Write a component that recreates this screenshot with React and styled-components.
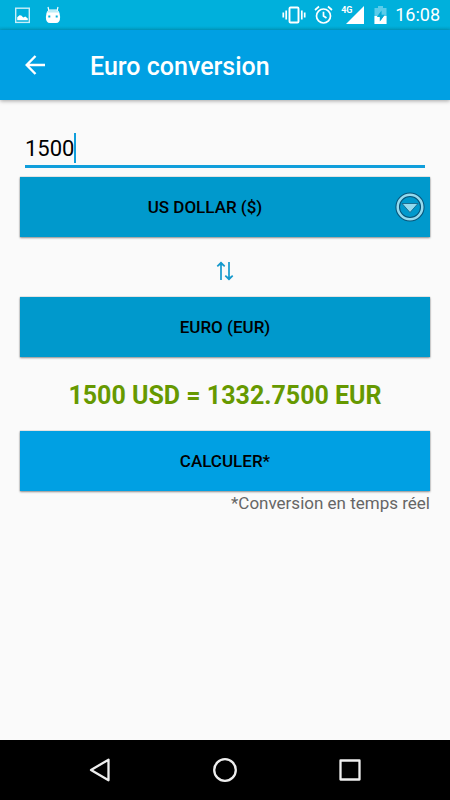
import React, { useState } from "react";
import styled, { createGlobalStyle } from "styled-components";

const GlobalStyle = createGlobalStyle`
  *, *::before, *::after { box-sizing: border-box; }
  body { margin: 0; background: #fafafa; }
  button, input, select { font: inherit; color: inherit; margin: 0; }
`;

const Screen = styled.div`
  min-height: 100vh;
  display: flex;
  flex-direction: column;
  background: #fafafa;
  color: #000;
  font-family: Roboto, "Liberation Sans", sans-serif;
`;

const StatusBar = styled.div`
  height: 30px;
  padding: 0 10px 0 14px;
  display: flex;
  align-items: center;
  justify-content: space-between;
  background: linear-gradient(#00b0dc 26px, #00a2ca);
  color: #fff;
`;

const StatusGroup = styled.div`
  display: flex;
  align-items: center;
  gap: ${(p) => p.$gap}px;
`;

const Clock = styled.time`
  font-size: 18px;
  line-height: 30px;
`;

const Signal = styled.span`
  position: relative;
  display: flex;
  padding: 0 2px 0 5px;
`;

const Network = styled.span`
  position: absolute;
  left: 0;
  top: 0;
  font-size: 9px;
  line-height: 9px;
  font-weight: 700;
`;

const AppBar = styled.header`
  height: 70px;
  padding: 0 20px;
  display: flex;
  align-items: center;
  gap: 40px;
  background: #00a0e3;
  color: #fff;
  box-shadow: 0 1px 4px rgba(0, 0, 0, 0.35);
`;

const IconButton = styled.button`
  display: flex;
  padding: 0;
  border: 0;
  background: none;
  cursor: pointer;
`;

const Title = styled.h1`
  margin: 0;
  padding-top: 3px;
  font-size: 25px;
  line-height: 32px;
  font-weight: 500;
`;

const Form = styled.form`
  flex: 1;
  padding: 30px 20px;
  display: flex;
  flex-direction: column;
`;

const AmountField = styled.label`
  height: 38px;
  margin: 0 5px 9px;
  display: flex;
  align-items: center;
  border-bottom: 3px solid #109edb;
`;

const AmountInput = styled.input`
  field-sizing: content;
  min-width: 12px;
  padding: 2px 0 0;
  border: 0;
  outline: 0;
  background: none;
  caret-color: transparent;
  font-size: 22px;
  line-height: 30px;
`;

const Caret = styled.span`
  width: 2px;
  height: 30px;
  background: #109edb;
`;

const raised = `
  width: 100%;
  height: 60px;
  border: 0;
  border-radius: 0;
  font-size: 17px;
  font-weight: 500;
  box-shadow: 0 0 1px rgba(0, 0, 0, 0.4), 0 1px 2px rgba(0, 0, 0, 0.4);
  cursor: pointer;
`;

const RaisedButton = styled.button`
  && {
    ${raised}
    background: ${(p) => (p.$primary ? "#00a0e3" : "#0099cc")};
  }
`;

const SelectBox = styled.div`
  position: relative;
`;

const CurrencySelect = styled.select`
  && {
    ${raised}
    display: block;
    appearance: none;
    padding: 0 40px 0 0;
    text-align: center;
    text-align-last: center;
    background: #0099cc;
  }
`;

const SelectMark = styled.span`
  position: absolute;
  right: 5px;
  top: 0;
  bottom: 0;
  display: flex;
  align-items: center;
  pointer-events: none;
`;

const SwapRow = styled.div`
  height: 60px;
  display: flex;
  align-items: center;
  justify-content: center;
  padding-top: 8px;
`;

const Result = styled.output`
  height: 74px;
  padding-top: 3px;
  display: flex;
  align-items: center;
  justify-content: center;
  font-size: 25px;
  line-height: 32px;
  font-weight: 700;
  color: #669900;
`;

const Note = styled.p`
  margin: 2px 0 0;
  font-size: 17px;
  line-height: 21px;
  text-align: right;
  color: #666;
`;

const NavBar = styled.nav`
  height: 60px;
  padding: 0 37px;
  display: flex;
  align-items: center;
  justify-content: space-around;
  background: #000;
  color: #eee;
`;

const PictureIcon = () => (
  <svg width="17" height="17" viewBox="0 0 17 17" aria-hidden="true">
    <rect x="1.7" y="1.2" width="13.6" height="14.2" fill="none" stroke="#c9eff8" strokeWidth="1.4" />
    <path d="M3.2 13.2v-3l2.3-2 1.8.3 2 2 2-1 2.5 2v1.7z" fill="#fff" />
  </svg>
);

const DroidIcon = () => (
  <svg width="16" height="18" viewBox="0 0 16 18" aria-hidden="true">
    <path d="M4 5 3 1M12 5l1-4" stroke="#fff" strokeWidth="1.2" />
    <path d="M1.5 7Q3 3.5 5 3.5h6q2 0 3.5 3.5l.6 4q0 6-4.1 6H5q-4.1 0-4.1-6z" fill="#fff" />
    <path d="M2 6.5Q3.4 4 5 4h6q1.6 0 3 2.5z" fill="#bcecf6" />
    <rect x="3.3" y="9.5" width="2" height="2" fill="#00b0dc" />
    <rect x="10.7" y="9.5" width="2" height="2" fill="#00b0dc" />
  </svg>
);

const VibrateIcon = () => (
  <svg width="24" height="20" viewBox="0 0 24 20" fill="none" stroke="#fff" aria-hidden="true">
    <rect x="7.5" y="2.5" width="9" height="15" rx="1" strokeWidth="1.9" />
    <path d="M4.2 5.5v9M19.8 5.5v9M1.3 7.5v5M22.7 7.5v5" strokeWidth="1.7" />
  </svg>
);

const AlarmIcon = () => (
  <svg width="19" height="20" viewBox="0 0 19 20" fill="none" stroke="#fff" strokeWidth="1.7" aria-hidden="true">
    <circle cx="9.5" cy="11" r="7" />
    <path d="M1 5l4-3.5M18 5l-4-3.5M9.5 6.8V11l3 2" />
  </svg>
);

const SignalIcon = () => (
  <svg width="18" height="18" viewBox="0 0 18 18" aria-hidden="true">
    <path d="M18 0v18H0z" fill="#fff" />
  </svg>
);

const BatteryIcon = () => (
  <svg width="13" height="18" viewBox="0 0 13 18" aria-hidden="true">
    <path d="M4 0h5v2h3.5v16H.5V2H4z" fill="#5accea" />
    <path d="M.5 10h12v8H.5z" fill="#fff" />
    <path d="M7.5 4.5 2.8 11h3v4.5l4.9-6.8H7.5z" fill="#00b0dc" />
    <path d="M7.2 5.5v4H4.2zM5.8 10h4l-3.5 5z" fill="#0aa6cf" />
  </svg>
);

const BackIcon = () => (
  <svg width="30" height="30" viewBox="0 0 30 30" fill="none" stroke="#fff" strokeWidth="2.4" aria-hidden="true">
    <path d="M25 15H7M15.5 6 6.7 15l8.8 9" />
  </svg>
);

const DropdownIcon = () => (
  <svg width="30" height="30" viewBox="0 0 30 30" aria-hidden="true">
    <circle cx="15" cy="15" r="12.3" fill="none" stroke="#07557a" strokeWidth="4.6" />
    <circle cx="15" cy="15" r="12.3" fill="none" stroke="#94daee" strokeWidth="2.5" />
    <path d="M7 11.5h16L15 20.5z" fill="#94daee" stroke="#17668a" strokeWidth=".9" strokeLinejoin="round" />
  </svg>
);

const SwapIcon = () => (
  <svg width="18" height="20" viewBox="0 0 18 20" fill="none" stroke="#1599cc" aria-hidden="true">
    <path d="M5 19V2M13 1v17" strokeWidth="1.7" />
    <path d="M1.3 5.4 5 1.8 8.7 5.4M9.3 14.6l3.7 3.6 3.7-3.6" strokeWidth="1.7" />
    <path d="M5 1 2.8 4.2h4.4zM13 19l2.2-3.2h-4.4z" fill="#1599cc" stroke="none" />
  </svg>
);

const NavIcon = ({ children }) => (
  <svg width="26" height="26" viewBox="0 0 26 26" fill="none" stroke="currentColor" strokeWidth="2.3" strokeLinejoin="round" aria-hidden="true">
    {children}
  </svg>
);

const rates = { USD: 0.8885 };

const convert = (amount, currency) =>
  `${amount} ${currency} = ${(Number(amount) * rates[currency]).toFixed(4)} EUR`;

export default function App() {
  const [amount, setAmount] = useState("1500");
  const [currency, setCurrency] = useState("USD");
  const [result, setResult] = useState(convert("1500", "USD"));

  const submit = (event) => {
    event.preventDefault();
    setResult(convert(amount, currency));
  };

  return (
    <Screen>
      <GlobalStyle />
      <StatusBar>
        <StatusGroup $gap={14}>
          <PictureIcon />
          <DroidIcon />
        </StatusGroup>
        <StatusGroup $gap={8}>
          <VibrateIcon />
          <AlarmIcon />
          <Signal>
            <Network>4G</Network>
            <SignalIcon />
          </Signal>
          <BatteryIcon />
          <Clock>16:08</Clock>
        </StatusGroup>
      </StatusBar>
      <AppBar>
        <IconButton type="button" aria-label="Retour">
          <BackIcon />
        </IconButton>
        <Title>Euro conversion</Title>
      </AppBar>
      <Form onSubmit={submit}>
        <AmountField>
          <AmountInput
            aria-label="Montant"
            inputMode="decimal"
            value={amount}
            onChange={(event) => setAmount(event.target.value)}
          />
          <Caret />
        </AmountField>
        <SelectBox>
          <CurrencySelect
            aria-label="Devise"
            value={currency}
            onChange={(event) => setCurrency(event.target.value)}
          >
            <option value="USD">US DOLLAR ($)</option>
          </CurrencySelect>
          <SelectMark>
            <DropdownIcon />
          </SelectMark>
        </SelectBox>
        <SwapRow>
          <IconButton type="button" aria-label="Inverser">
            <SwapIcon />
          </IconButton>
        </SwapRow>
        <RaisedButton type="button">EURO (EUR)</RaisedButton>
        <Result>{result}</Result>
        <RaisedButton type="submit" $primary>
          CALCULER*
        </RaisedButton>
        <Note>*Conversion en temps réel</Note>
      </Form>
      <NavBar>
        <IconButton type="button" aria-label="Précédent">
          <NavIcon>
            <path d="M4 13 21.5 2.7v20.6z" />
          </NavIcon>
        </IconButton>
        <IconButton type="button" aria-label="Accueil">
          <NavIcon>
            <circle cx="13" cy="13" r="10.8" />
          </NavIcon>
        </IconButton>
        <IconButton type="button" aria-label="Applications récentes">
          <NavIcon>
            <rect x="3.5" y="3.5" width="19" height="19" />
          </NavIcon>
        </IconButton>
      </NavBar>
    </Screen>
  );
}
